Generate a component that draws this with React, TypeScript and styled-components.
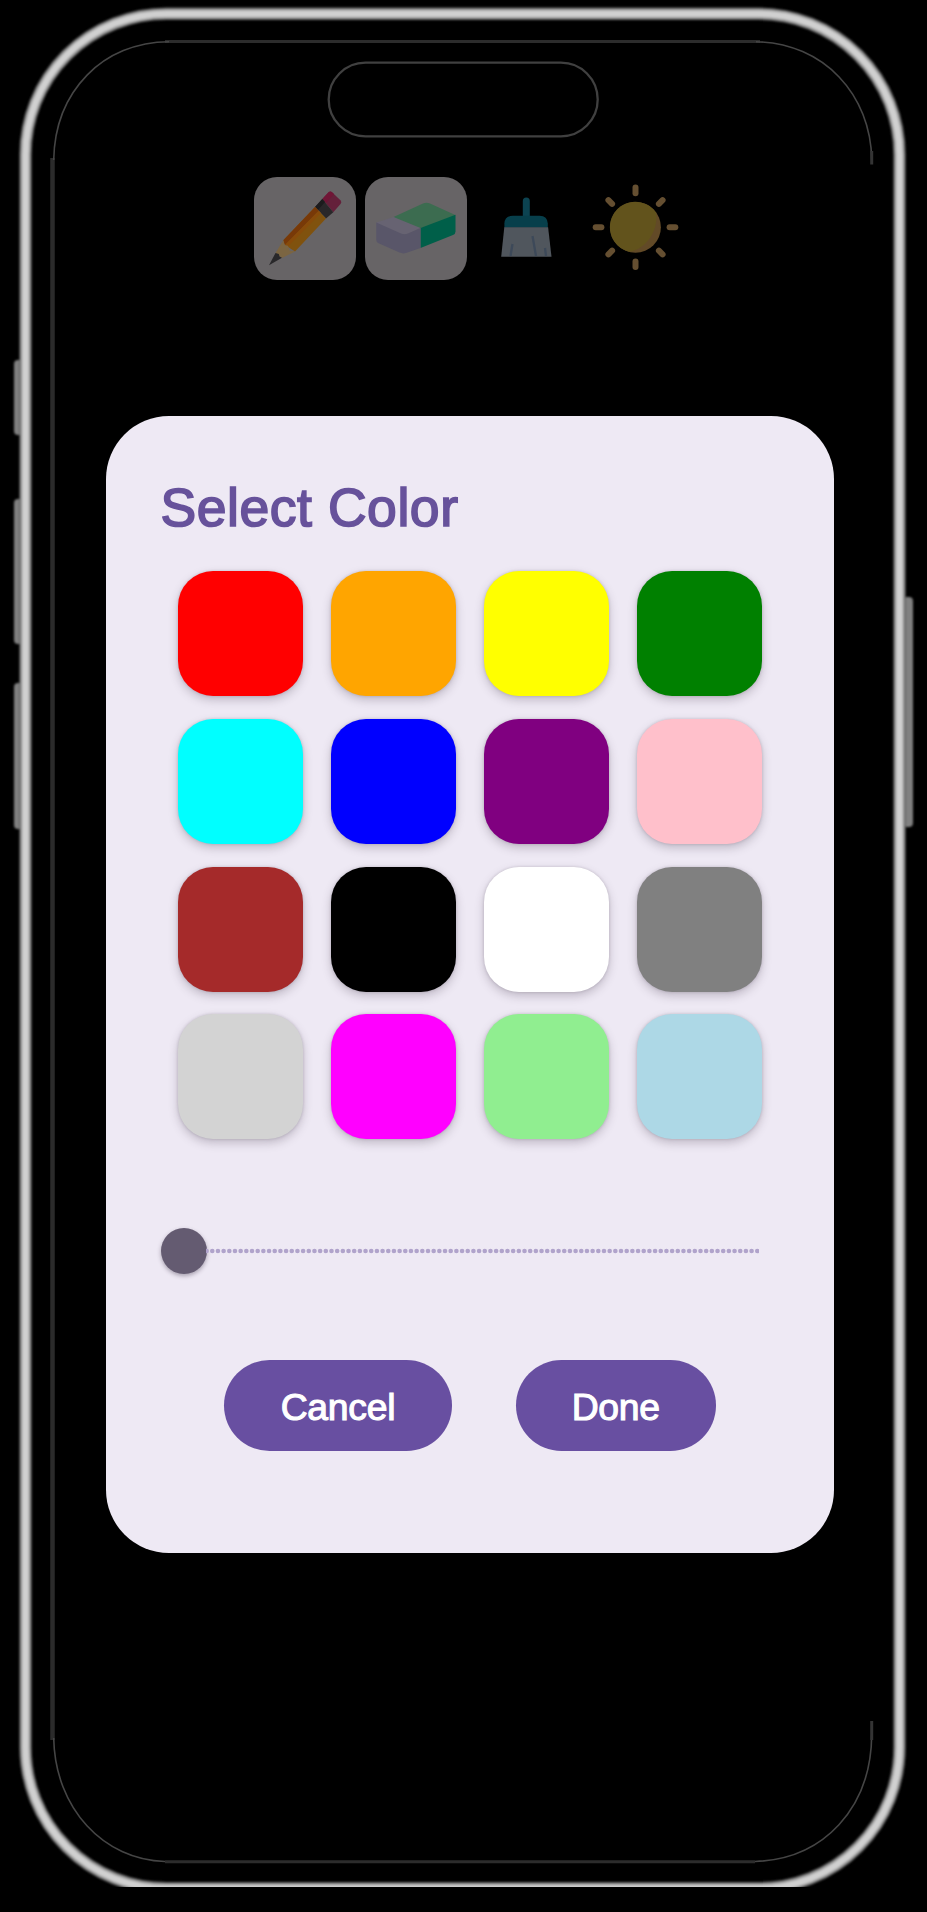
import React, { useState } from "react";
import styled, { createGlobalStyle } from "styled-components";

const GlobalStyle = createGlobalStyle`
  * { box-sizing: border-box; }
  body { margin: 0; background: #000; }
`;

const Stage = styled.main`
  display: grid;
  width: 927px;
  height: 1912px;
  overflow: hidden;
  background: #000;
  font-family: "Liberation Sans", Arial, sans-serif;
`;

const FrameArt = styled.svg`
  grid-area: 1 / 1;
  display: block;
`;

const Screen = styled.div`
  grid-area: 1 / 1;
  display: flex;
  flex-direction: column;
  align-items: flex-start;
  padding-top: 177.3px;
`;

const Toolbar = styled.div`
  display: flex;
  gap: 9px;
  margin-left: 254px;
`;

const Tool = styled.button<{ $filled?: boolean }>`
  width: 102px;
  height: 102.5px;
  padding: 0;
  border: 0;
  border-radius: 23px;
  background: ${(p) => (p.$filled ? "#676466" : "transparent")};

  svg {
    display: block;
  }
`;

const Dialog = styled.section`
  display: flex;
  flex-direction: column;
  width: 728px;
  height: 1136.6px;
  margin: 136.4px 0 0 106px;
  padding: 61px 54.5px 0;
  border-radius: 63px;
  background: #eee9f4;
`;

const Title = styled.h1`
  margin: 0;
  height: 62px;
  color: #67529b;
  font-size: 53.5px;
  font-weight: 400;
  line-height: 62px;
  letter-spacing: 0.55px;
  white-space: nowrap;
  -webkit-text-stroke: 1.7px #67529b;
`;

const Swatches = styled.div`
  display: grid;
  grid-template-columns: repeat(4, 125px);
  gap: 22.7px 28.2px;
  margin: 32px 0 0 17px;
`;

const Swatch = styled.button<{ $color: string }>`
  height: 125px;
  padding: 0;
  border: 0;
  border-radius: 35px;
  background: ${(p) => p.$color};
  box-shadow: 0 4px 10px rgba(60, 50, 70, 0.26), 0 0 3px rgba(60, 50, 70, 0.2);
`;

const Slider = styled.div`
  display: flex;
  align-items: center;
  margin-top: 89px;
`;

const Thumb = styled.span`
  width: 46px;
  height: 46px;
  flex: none;
  border-radius: 50%;
  background: #645b71;
  box-shadow: 0 2px 4px rgba(50, 40, 60, 0.38);
`;

const Track = styled.svg`
  display: block;
  margin-left: -1px;
`;

const Actions = styled.div`
  display: flex;
  gap: 63.5px;
  margin: 85.5px 0 0 63.5px;
`;

const Action = styled.button<{ $width: number }>`
  width: ${(p) => p.$width}px;
  height: 91px;
  padding: 4px 0 0;
  border: 0;
  border-radius: 46px;
  background: #684fa1;
  color: #fff;
  font-family: inherit;
  font-size: 37.3px;
  letter-spacing: -0.25px;
  -webkit-text-stroke: 1.1px #fff;
`;

const COLORS = [
  "red", "orange", "yellow", "green",
  "cyan", "blue", "purple", "pink",
  "brown", "black", "white", "gray",
  "lightgray", "magenta", "lightgreen", "lightblue",
];

const BEZEL: [number, string][] = [
  [12.5, "#5a5a5a"],
  [10.5, "#909090"],
  [6.5, "#d0d0d0"],
];

const SIDE_KEYS = [
  { x: 14, y: 360, h: 75 },
  { x: 14, y: 499, h: 145 },
  { x: 14, y: 683, h: 146 },
  { x: 902, y: 597, h: 230 },
];

function PhoneFrame() {
  return (
    <FrameArt width="927" height="1912" viewBox="0 0 927 1912" fill="none">
      <defs>
        <clipPath id="cut">
          <rect width="927" height="1887" />
        </clipPath>
        <filter id="glow" filterUnits="userSpaceOnUse" x="0" y="0" width="927" height="1912">
          <feGaussianBlur stdDeviation="1" />
        </filter>
      </defs>
      <g filter="url(#glow)">
        {SIDE_KEYS.map((k) => (
          <rect key={k.y} x={k.x} y={k.y} width="11" height={k.h} rx="4" fill="#808080" />
        ))}
      </g>
      <g clipPath="url(#cut)">
        <g filter="url(#glow)">
          {BEZEL.map(([w, c]) => (
            <rect key={w} x="25.5" y="13.7" width="874" height="1874.6" rx="141" stroke={c} strokeWidth={w} />
          ))}
        </g>
      </g>
      <path d="M52.5 158V1740" stroke="#2b2b2b" strokeWidth="4.5" />
      <path d="M165 41.5H760M165 1861.7H755" stroke="#2c2c2c" strokeWidth="3" />
      <path
        d="M53.7 160C55 91 103 42 169 41.7M756 41.7C824 43 871 95 871.7 160M53.7 1738C55 1809 104 1860 165 1861.5M755 1861.5C824 1859 871 1808 871.7 1735"
        stroke="#454545"
        strokeWidth="1.6"
      />
      <path d="M871.7 151V164.5M871.7 1721V1740" stroke="#343434" strokeWidth="3" />
      <rect x="328.7" y="62.7" width="269" height="73.6" rx="36.8" stroke="#404040" strokeWidth="2.3" />
    </FrameArt>
  );
}

function PencilIcon() {
  return (
    <svg width="102" height="103" viewBox="0 0 102 103">
      <path d="M68.3 22 74.8 15Q76.3 13.8 77.8 15L86.7 23.4Q88 25 86.7 26.8L79.3 35.3Z" fill="#64203a" />
      <path d="M68.3 22 74.8 15Q76.3 13.8 77.8 15L80 17 72 26Z" fill="#701536" />
      <path d="M61 30 68.3 22 79.3 35.3 72 41.5Z" fill="#292729" />
      <path d="M61 30 68.3 22 71 25 64 33Z" fill="#1c1b1d" />
      <path d="M61 30 29.3 63.3 31 68 41 74.5 72 41.5Z" fill="#80520e" />
      <path d="M61 30 29.3 63.3 31 68 64.7 33.8Z" fill="#783908" />
      <path d="M64.7 33.8 31 68 33 70.5 67 36Z" fill="#884b0a" />
      <path d="M29.3 63.3 21.5 76 28 81 41 74.5 35.5 73.5 34 68.8 30.5 68Z" fill="#7b6542" />
      <path d="M21.5 76 15 88.3 28 80.8 25.5 79.5 24.8 77Z" fill="#29282a" />
    </svg>
  );
}

function EraserIcon() {
  return (
    <svg width="102" height="103" viewBox="0 0 102 103">
      <path d="M28.5 40 58 26.6Q61.5 25 65 26.6L90.3 38 88 44 55.5 51 45 51Z" fill="#3c6c50" />
      <path d="M55.5 51 90.5 37.7V54.5Q90.5 56.8 88 58L55.5 71Z" fill="#005f49" />
      <path d="M11.4 45.6 28.5 40 55.5 51 43 56.8Q39.5 58.2 36 56.9L12 49Z" fill="#676372" />
      <path d="M11.3 45.6 36 56.6Q39.5 58 43 56.6L55.5 51V71L41 76Q37.8 77 34.5 75.6L13 66Q11.3 65 11.3 63Z" fill="#595669" />
    </svg>
  );
}

function BroomIcon() {
  return (
    <svg width="102" height="103" viewBox="0 0 102 103">
      <path d="M46.8 42V24Q46.8 20.5 50.3 20.5T53.8 24V42Z" fill="#0c4351" />
      <path d="M28.4 50.8V46.5Q28.7 39 37 38.7H63.5Q71.5 39 71.8 46.5V50.8Z" fill="#073f4b" />
      <path d="M28.3 50.3H72.1L75.5 79.7H25.2Z" fill="#50565d" />
      <path d="M36.5 67 34.5 79M56.5 59 60 79M69 71 70 79" stroke="#3d4959" strokeWidth="2.3" fill="none" />
    </svg>
  );
}

function SunIcon() {
  return (
    <svg width="102" height="103" viewBox="0 0 102 103">
      <circle cx="48.5" cy="50.3" r="25.4" fill="#624a27" />
      <path d="M69 35.5A25.4 25.4 0 1 0 42 74.8C58 73 72 54 69 35.5Z" fill="#62531c" />
      {[0, 45, 90, 135, 180, 225, 270, 315].map((a) => (
        <path
          key={a}
          d={a % 90 ? "M48.5 12V17.2" : "M48.5 10.5V16.2"}
          transform={`rotate(${a} 48.5 50.3)`}
          stroke="#654f31"
          strokeWidth="6"
          strokeLinecap="round"
        />
      ))}
    </svg>
  );
}

export default function App() {
  const [, setColor] = useState("red");
  return (
    <Stage>
      <GlobalStyle />
      <PhoneFrame />
      <Screen>
        <Toolbar>
          <Tool $filled aria-label="Pencil"><PencilIcon /></Tool>
          <Tool $filled aria-label="Eraser"><EraserIcon /></Tool>
          <Tool aria-label="Clear"><BroomIcon /></Tool>
          <Tool aria-label="Theme"><SunIcon /></Tool>
        </Toolbar>
        <Dialog role="dialog" aria-label="Select Color">
          <Title>Select Color</Title>
          <Swatches>
            {COLORS.map((c) => (
              <Swatch key={c} $color={c} aria-label={c} onClick={() => setColor(c)} />
            ))}
          </Swatches>
          <Slider>
            <Thumb />
            <Track width="553" height="6" viewBox="0 0 553 6">
              <path d="M0.6 3H552" stroke="#b0a3cb" strokeWidth="4.6" strokeLinecap="round" strokeDasharray="0 5.677" />
            </Track>
          </Slider>
          <Actions>
            <Action $width={228}>Cancel</Action>
            <Action $width={200.5}>Done</Action>
          </Actions>
        </Dialog>
      </Screen>
    </Stage>
  );
}
